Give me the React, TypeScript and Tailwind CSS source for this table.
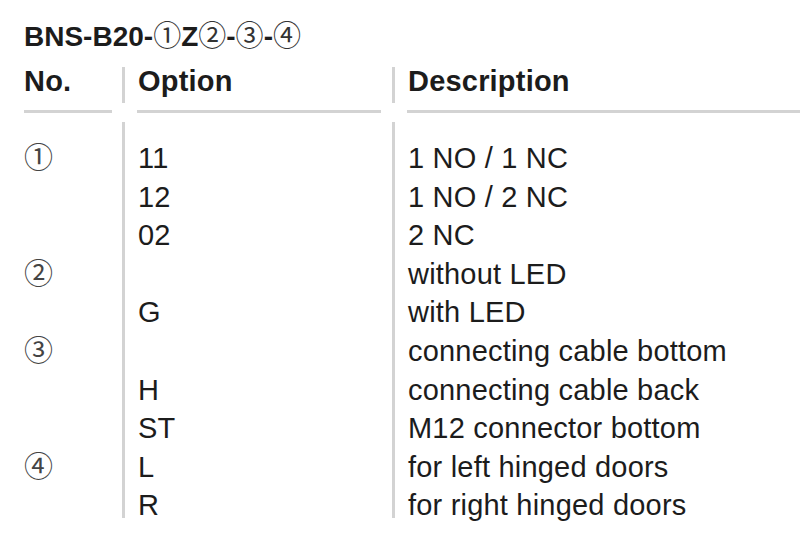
import React from 'react';

const rows: { no?: string; option?: string; desc: string }[] = [
  { no: '①', option: '11', desc: '1 NO / 1 NC' },
  { option: '12', desc: '1 NO / 2 NC' },
  { option: '02', desc: '2 NC' },
  { no: '②', desc: 'without LED' },
  { option: 'G', desc: 'with LED' },
  { no: '③', desc: 'connecting cable bottom' },
  { option: 'H', desc: 'connecting cable back' },
  { option: 'ST', desc: 'M12 connector bottom' },
  { no: '④', option: 'L', desc: 'for left hinged doors' },
  { option: 'R', desc: 'for right hinged doors' },
];

const font = { fontFamily: '"Liberation Sans", "Noto Sans CJK JP", sans-serif' };

export default function App() {
  return (
    <div className="w-[800px] h-[545px] bg-white text-[#1c1c1c] overflow-hidden pl-[24px] pt-[21px]" style={font}>
      <h1 className="text-[28px] leading-[32px] font-bold whitespace-nowrap">
        BNS-B20-<span className="font-normal text-[#333]">①</span>Z<span className="font-normal text-[#333]">②</span>-<span className="font-normal text-[#333]">③</span>-<span className="font-normal text-[#333]">④</span>
      </h1>

      {/* header */}
      <div className="mt-[14px] flex h-[36px] text-[29px] leading-[28px] font-bold tracking-[0.2px]">
        <div className="w-[98px]">No.</div>
        <div className="w-[270px] border-l-[3px] border-[#d3d3d3] pl-[13px]">Option</div>
        <div className="flex-1 border-l-[3px] border-[#d3d3d3] pl-[13px]">Description</div>
      </div>

      {/* underlines */}
      <div className="mt-[7px] flex h-[3px]">
        <div className="w-[98px] pr-[10px]">
          <div className="h-full bg-[#d3d3d3]" />
        </div>
        <div className="w-[270px] pl-[15px] pr-[11px]">
          <div className="h-full bg-[#d3d3d3]" />
        </div>
        <div className="flex-1 pl-[15px]">
          <div className="h-full bg-[#d3d3d3]" />
        </div>
      </div>

      {/* body */}
      <div className="mt-[9px] flex h-[396px] text-[29px] leading-[38.6px] tracking-[0.2px]">
        <div className="w-[98px] pt-[17px]">
          {rows.map((r, i) => (
            <div key={i} className="h-[38.6px] text-[#444]">{r.no ?? ''}</div>
          ))}
        </div>
        <div className="w-[270px] border-l-[3px] border-[#d3d3d3] pl-[13px] pt-[17px]">
          {rows.map((r, i) => (
            <div key={i} className="h-[38.6px]">{r.option ?? ''}</div>
          ))}
        </div>
        <div className="flex-1 border-l-[3px] border-[#d3d3d3] pl-[13px] pt-[17px] whitespace-nowrap">
          {rows.map((r, i) => (
            <div key={i} className="h-[38.6px]">{r.desc}</div>
          ))}
        </div>
      </div>
    </div>
  );
}
